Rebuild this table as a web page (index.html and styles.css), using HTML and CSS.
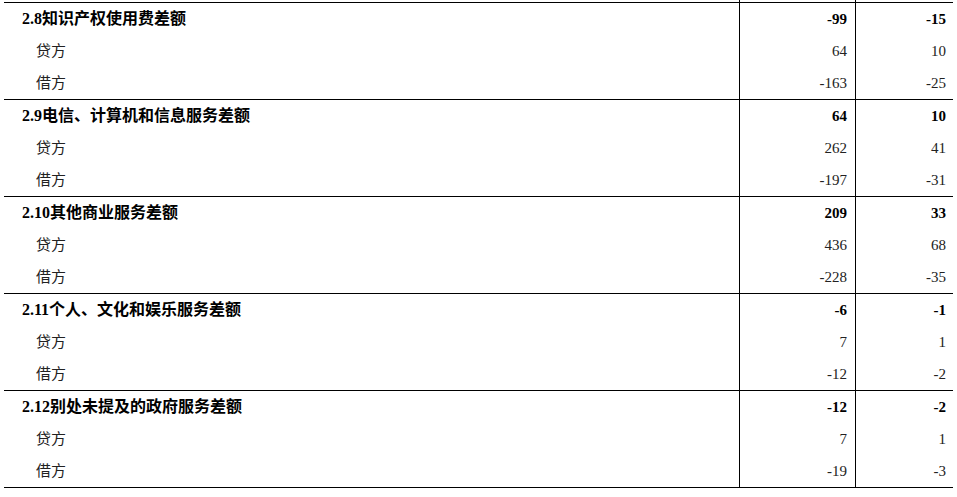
FILE: index.html
```html
<!DOCTYPE html>
<html lang="zh">
<head>
<meta charset="utf-8">
<link rel="stylesheet" href="styles.css">
</head>
<body>
<div class="sheet">
  <div class="row stub"><div class="c1"></div><div class="c2"></div><div class="c3"></div></div>
  <div class="group">
    <div class="row head"><div class="c1">2.8知识产权使用费差额</div><div class="c2">-99</div><div class="c3">-15</div></div>
    <div class="row sub"><div class="c1">贷方</div><div class="c2">64</div><div class="c3">10</div></div>
    <div class="row sub"><div class="c1">借方</div><div class="c2">-163</div><div class="c3">-25</div></div>
  </div>
  <div class="group">
    <div class="row head"><div class="c1">2.9电信、计算机和信息服务差额</div><div class="c2">64</div><div class="c3">10</div></div>
    <div class="row sub"><div class="c1">贷方</div><div class="c2">262</div><div class="c3">41</div></div>
    <div class="row sub"><div class="c1">借方</div><div class="c2">-197</div><div class="c3">-31</div></div>
  </div>
  <div class="group">
    <div class="row head"><div class="c1">2.10其他商业服务差额</div><div class="c2">209</div><div class="c3">33</div></div>
    <div class="row sub"><div class="c1">贷方</div><div class="c2">436</div><div class="c3">68</div></div>
    <div class="row sub"><div class="c1">借方</div><div class="c2">-228</div><div class="c3">-35</div></div>
  </div>
  <div class="group">
    <div class="row head"><div class="c1">2.11个人、文化和娱乐服务差额</div><div class="c2">-6</div><div class="c3">-1</div></div>
    <div class="row sub"><div class="c1">贷方</div><div class="c2">7</div><div class="c3">1</div></div>
    <div class="row sub"><div class="c1">借方</div><div class="c2">-12</div><div class="c3">-2</div></div>
  </div>
  <div class="group last">
    <div class="row head"><div class="c1">2.12别处未提及的政府服务差额</div><div class="c2">-12</div><div class="c3">-2</div></div>
    <div class="row sub"><div class="c1">贷方</div><div class="c2">7</div><div class="c3">1</div></div>
    <div class="row sub"><div class="c1">借方</div><div class="c2">-19</div><div class="c3">-3</div></div>
  </div>
</div>
</body>
</html>
```

FILE: styles.css
```css
html, body {
  margin: 0;
  padding: 0;
  background: #fff;
}
body {
  font-family: "Liberation Serif", "Noto Sans CJK SC", serif;
  font-size: 15px;
  color: #222;
}
.sheet {
  margin-left: 4px;
  width: 949px;
}
.row {
  display: grid;
  grid-template-columns: 735px 116px 98px;
  height: 32px;
  line-height: 32px;
}
.row.stub {
  height: 2px;
  line-height: 2px;
}
.group {
  border-top: 1px solid #000;
}
.group.last {
  border-bottom: 1px solid #000;
}
.c2, .c3 {
  border-left: 1px solid #000;
  text-align: right;
  white-space: nowrap;
}
.c2 { padding-right: 8px; }
.c3 { padding-right: 7px; }
.c1 { white-space: nowrap; }
.head .c1 {
  padding-left: 18px;
  font-size: 16px;
}
.sub .c1 { padding-left: 32px; }
.head {
  font-weight: bold;
  color: #000;
}
```
